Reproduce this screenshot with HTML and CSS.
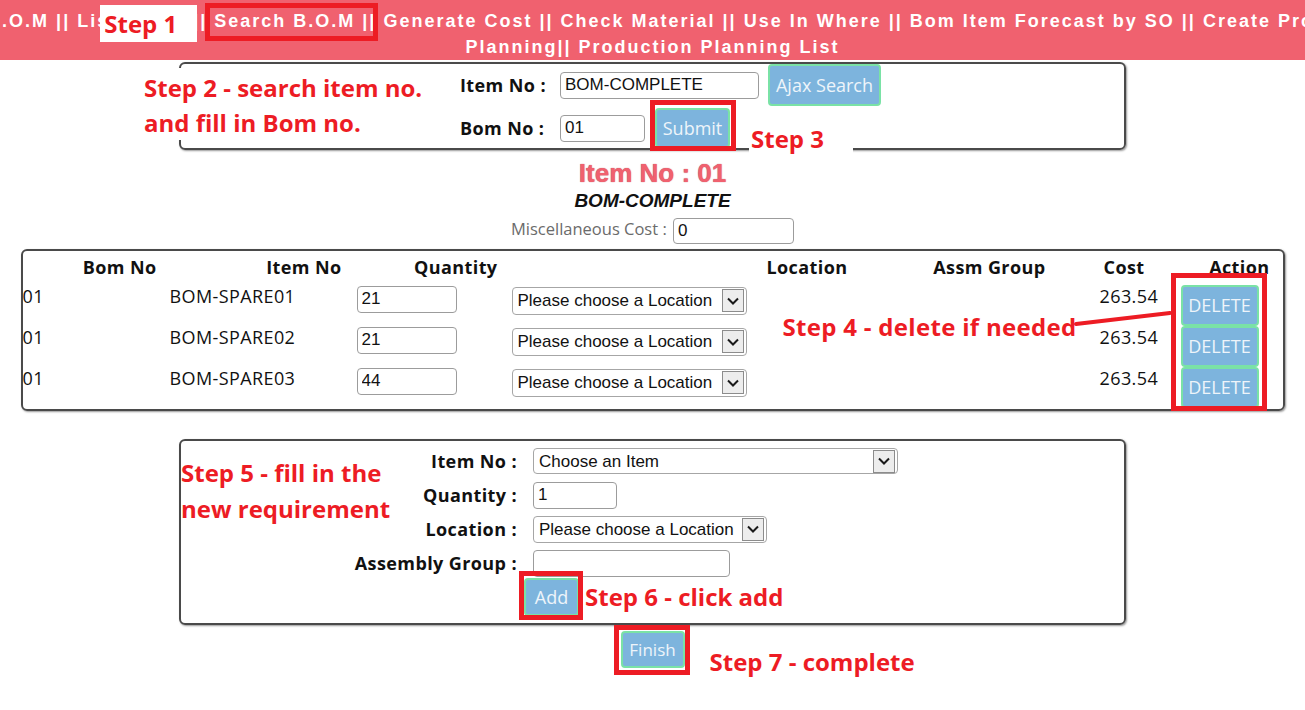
FILE: index.html
```html
<!DOCTYPE html>
<html lang="en">

<head>
    <meta charset="UTF-8" />
    <title>Search B.O.M</title>
    <link rel="stylesheet" href="styles.css">
</head>

<body>

    <div class="topnav">
        <div class="navline">
            <a href="#">Create B.O.M</a> || <a href="#">List B.O.M</a> || <span class="navmark"><a href="#">Search B.O.M</a> ||</span> <a href="#">Generate Cost</a> || <a href="#">Check Material</a> || <a href="#">Use In Where</a> || <a href="#">Bom Item Forecast by SO</a> || <a href="#">Create Production</a>
        </div>
        <div class="navline">
            <a href="#">Planning</a>|| <a href="#">Production Planning List</a>
        </div>
    </div>

    <div class="searchbox">
        <p class="step step2">Step 2 - search item no.<br>and fill in Bom no.</p>
        <div class="formgrid">
            <label>Item No :</label>
            <div class="fieldrow">
                <input type="text" class="in-item" value="BOM-COMPLETE">
                <button class="btn btn-ajax">Ajax Search</button>
            </div>
            <label>Bom No :</label>
            <div class="fieldrow">
                <input type="text" class="in-bom" value="01">
                <span class="mark mark-submit"><button class="btn btn-submit">Submit</button></span>
            </div>
        </div>
        <p class="step step3">Step 3</p>
    </div>

    <h2 class="itemtitle">Item No : 01</h2>
    <h3 class="bomname">BOM-COMPLETE</h3>
    <div class="misc">
        <span>Miscellaneous Cost :</span>
        <input type="text" class="in-misc" value="0">
    </div>

    <div class="bombox">
        <div class="bomgrid">
            <div class="th h-bom">Bom No</div>
            <div class="th h-item">Item No</div>
            <div class="th h-qty">Quantity</div>
            <div class="th"></div>
            <div class="th h-loc">Location</div>
            <div class="th h-assm">Assm Group</div>
            <div class="th h-cost">Cost</div>
            <div class="th h-act">Action</div>

            <div class="td">01</div>
            <div class="td c-item">BOM-SPARE01</div>
            <div class="td c-qty"><input type="text" class="in-qty" value="21"></div>
            <div class="td c-loc">
                <span class="pick pick-row"><select><option>Please choose a Location</option></select><span class="pick-arrow"><svg width="12" height="8" viewBox="0 0 12 8"><path d="M1 1.5 6 6.5 11 1.5" fill="none" stroke="#1a1a1a" stroke-width="2"/></svg></span></span>
            </div>
            <div class="td"></div>
            <div class="td"></div>
            <div class="td c-cost">263.54</div>
            <div class="td c-act"><button class="btn btn-del">DELETE</button></div>

            <div class="td">01</div>
            <div class="td c-item">BOM-SPARE02</div>
            <div class="td c-qty"><input type="text" class="in-qty" value="21"></div>
            <div class="td c-loc">
                <span class="pick pick-row"><select><option>Please choose a Location</option></select><span class="pick-arrow"><svg width="12" height="8" viewBox="0 0 12 8"><path d="M1 1.5 6 6.5 11 1.5" fill="none" stroke="#1a1a1a" stroke-width="2"/></svg></span></span>
            </div>
            <div class="td"></div>
            <div class="td"></div>
            <div class="td c-cost">263.54</div>
            <div class="td c-act"><button class="btn btn-del">DELETE</button></div>

            <div class="td">01</div>
            <div class="td c-item">BOM-SPARE03</div>
            <div class="td c-qty"><input type="text" class="in-qty" value="44"></div>
            <div class="td c-loc">
                <span class="pick pick-row"><select><option>Please choose a Location</option></select><span class="pick-arrow"><svg width="12" height="8" viewBox="0 0 12 8"><path d="M1 1.5 6 6.5 11 1.5" fill="none" stroke="#1a1a1a" stroke-width="2"/></svg></span></span>
            </div>
            <div class="td"></div>
            <div class="td"></div>
            <div class="td c-cost">263.54</div>
            <div class="td c-act"><button class="btn btn-del">DELETE</button></div>
        </div>

        <p class="step step4">Step 4 - delete if needed</p>
        <svg class="step4-line" width="100" height="20" viewBox="0 0 100 20">
            <path d="M3 15 97 4" stroke="#ed1c24" stroke-width="4" stroke-linecap="round" />
        </svg>
        <div class="actmark"></div>
    </div>

    <div class="addbox">
        <p class="step step5">Step 5 - fill in the<br>new requirement</p>
        <div class="addgrid">
            <label>Item No :</label>
            <span class="pick pick-item"><select><option>Choose an Item</option></select><span class="pick-arrow"><svg width="12" height="8" viewBox="0 0 12 8"><path d="M1 1.5 6 6.5 11 1.5" fill="none" stroke="#1a1a1a" stroke-width="2"/></svg></span></span>
            <label>Quantity :</label>
            <div><input type="text" class="in-addqty" value="1"></div>
            <label>Location :</label>
            <span class="pick pick-addloc"><select><option>Please choose a Location</option></select><span class="pick-arrow"><svg width="12" height="8" viewBox="0 0 12 8"><path d="M1 1.5 6 6.5 11 1.5" fill="none" stroke="#1a1a1a" stroke-width="2"/></svg></span></span>
            <label>Assembly Group :</label>
            <div><input type="text" class="in-assm" value=""></div>
            <div class="addrow">
                <span class="mark mark-add"><button class="btn btn-add">Add</button></span>
                <span class="step step6">Step 6 - click add</span>
            </div>
        </div>
    </div>

    <div class="finishrow">
        <span class="mark mark-finish">
            <button class="btn btn-finish">Finish</button>
            <span class="step step7">Step 7 - complete</span>
        </span>
    </div>

</body>

</html>
```

FILE: styles.css
```css
body {
    margin: 0;
    min-height: 710px;
    background-color: #fff;
    color: #111;
    font-family: "Open Sans", Arial, sans-serif;
}

/* menu bar */
.topnav {
    height: 60px;
    box-sizing: border-box;
    padding-top: 8px;
    background-color: #f0616f;
    display: flex;
    flex-direction: column;
    align-items: center;
    overflow: hidden;
    font-family: "Liberation Sans", Arial, sans-serif;
    font-weight: bold;
    font-size: 18px;
    line-height: 26px;
    letter-spacing: 2px;
    color: #fff;
    white-space: nowrap;
}

.topnav a {
    color: #fff;
    text-decoration: none;
}

.navmark {
    position: relative;
    display: inline-block;
}

.navmark::after {
    content: "";
    position: absolute;
    top: -5px;
    bottom: -7px;
    left: -9px;
    right: -2px;
    border: 5px solid #ed1c24;
}

.navmark::before {
    content: "Step 1";
    position: absolute;
    top: -3px;
    right: calc(100% + 17px);
    width: 93px;
    height: 37px;
    padding-left: 4px;
    background-color: #fff;
    color: #ed1c24;
    font-family: "Open Sans", sans-serif;
    font-size: 24px;
    line-height: 37px;
    letter-spacing: 0;
    text-align: left;
}

/* notes in red */
.step {
    margin: 0;
    color: #ed1c24;
    font-family: "Open Sans", sans-serif;
    font-weight: bold;
    font-size: 24px;
    line-height: 30px;
    white-space: nowrap;
}

.mark {
    position: relative;
    display: inline-block;
}

.mark::after {
    content: "";
    position: absolute;
    border: 5px solid #ed1c24;
    pointer-events: none;
}

/* common controls */
input[type="text"] {
    box-sizing: border-box;
    height: 27px;
    border: 1px solid #9c9c9c;
    border-radius: 4px;
    padding: 0 4px;
    font-family: "Liberation Sans", Arial, sans-serif;
    font-size: 17px;
    color: #111;
}

.btn {
    box-sizing: border-box;
    background-color: #7db4dd;
    border: 2px solid #7ae2a6;
    border-radius: 4px;
    padding: 0;
    color: #eef4fa;
    font-family: "Open Sans", sans-serif;
    font-size: 17px;
    cursor: pointer;
}

.pick {
    box-sizing: border-box;
    display: inline-flex;
    align-items: center;
    height: 28px;
    border: 1px solid #a6a6a6;
    border-radius: 4px;
    padding: 0 2px 0 5px;
    background-color: #fff;
}

.pick select {
    flex: 1;
    min-width: 0;
    appearance: none;
    -webkit-appearance: none;
    border: none;
    background: transparent;
    padding: 0;
    font-family: "Liberation Sans", Arial, sans-serif;
    font-size: 17px;
    color: #111;
    outline: none;
}

.pick-arrow {
    box-sizing: border-box;
    width: 22px;
    height: 23px;
    border: 1px solid #8c8c8c;
    background-color: #ededed;
    display: flex;
    align-items: center;
    justify-content: center;
}

/* search box */
.searchbox {
    position: relative;
    box-sizing: border-box;
    width: 947px;
    height: 88px;
    margin: 2px auto 0;
    border: 2px solid #4a4a4a;
    border-radius: 6px;
    box-shadow: 1px 1px 2px #999;
}

.formgrid {
    display: grid;
    grid-template-columns: 100px auto;
    grid-template-rows: 42px 40px;
    row-gap: 2px;
    align-items: center;
    padding-left: 279px;
}

.formgrid label,
.addgrid label {
    font-weight: bold;
    font-size: 18px;
    letter-spacing: 0.4px;
}

.fieldrow {
    display: flex;
    align-items: center;
}

.in-item {
    width: 199px;
}

.in-bom {
    width: 85px;
}

.btn-ajax {
    width: 113px;
    height: 42px;
    margin-left: 9px;
    font-size: 18px;
}

.btn-submit {
    width: 75px;
    height: 40px;
    font-size: 18px;
    display: block;
}

.mark-submit {
    margin-left: 10px;
}

.mark-submit::after {
    top: -8px;
    bottom: -3px;
    left: -5px;
    right: -6px;
}

.step2 {
    position: absolute;
    left: -37px;
    top: 4px;
    width: 280px;
    padding-top: 2px;
    line-height: 35px;
    background-color: #fff;
}

.step3 {
    position: absolute;
    left: 568px;
    top: 60px;
    width: 102px;
    height: 30px;
    padding: 0 0 0 2px;
    background-color: #fff;
}

/* item heading */
.itemtitle {
    margin: 9px 0 0;
    text-align: center;
    font-family: "Liberation Sans", Arial, sans-serif;
    font-size: 26px;
    line-height: 28px;
    color: #f0616f;
    text-shadow: 0 0 1px #b04350;
}

.bomname {
    margin: 0;
    text-align: center;
    font-family: "Liberation Sans", Arial, sans-serif;
    font-style: italic;
    font-size: 19px;
    line-height: 28px;
}

.misc {
    text-align: center;
    line-height: 28px;
    font-size: 16.5px;
    color: #6b6b6b;
}

.in-misc {
    width: 121px;
    height: 26px !important;
    margin-left: 2px;
    vertical-align: middle;
}

/* bom lines */
.bombox {
    position: relative;
    box-sizing: border-box;
    width: 1264px;
    height: 162px;
    margin: 5px auto 0;
    border: 2px solid #4a4a4a;
    border-radius: 6px;
    box-shadow: 1px 1px 2px #999;
}

.bomgrid {
    display: grid;
    grid-template-columns: 136px 185px 160px 255px 100px 200px 110px 114px;
    grid-template-rows: 34px 41px 41px 41px;
    font-size: 18px;
    letter-spacing: 0.4px;
    line-height: 22px;
}

.th {
    padding-top: 5px;
    font-weight: bold;
    text-align: right;
}

.h-bom {
    padding-right: 2px;
}

.h-item {
    padding-right: 2px;
}

.h-qty {
    padding-right: 6px;
}

.h-loc {
    text-align: left;
    padding-left: 8px;
}

.h-assm {
    padding-right: 13px;
}

.h-cost {
    padding-right: 24px;
}

.h-act {
    padding-right: 13px;
}

.td {
    padding-top: 0;
}

.c-item {
    padding-left: 11px;
}

.c-qty {
    padding-left: 13px;
    padding-top: 1px;
}

.in-qty {
    width: 100px;
}

.c-loc {
    padding-top: 2px;
    padding-left: 8px;
    letter-spacing: 0;
}

.pick-row {
    width: 235px;
}

.c-cost {
    padding-left: 41px;
}

.c-act {
    padding: 0 0 0 12px;
}

.btn-del {
    display: block;
    width: 78px;
    height: 41px;
    font-size: 18px;
    letter-spacing: 0;
}

.step4 {
    position: absolute;
    left: 760px;
    top: 61px;
    letter-spacing: 0.3px;
}

.step4-line {
    position: absolute;
    left: 1050px;
    top: 58px;
}

.actmark {
    position: absolute;
    left: 1148px;
    top: 22px;
    width: 96px;
    height: 138px;
    box-sizing: border-box;
    border: 5px solid #ed1c24;
}

/* new line form */
.addbox {
    position: relative;
    box-sizing: border-box;
    width: 947px;
    height: 186px;
    margin: 28px auto 0;
    border: 2px solid #4a4a4a;
    border-radius: 6px;
    box-shadow: 1px 1px 2px #999;
}

.addgrid {
    display: grid;
    grid-template-columns: 336px auto;
    grid-auto-rows: 27px;
    column-gap: 16px;
    row-gap: 7px;
    padding-top: 7px;
    align-items: center;
}

.addgrid label {
    text-align: right;
    line-height: 27px;
}

.pick-item {
    width: 365px;
    height: 26px;
}

.pick-addloc {
    width: 234px;
    height: 27px;
}

.in-addqty {
    width: 84px;
    display: block;
}

.in-assm {
    width: 197px;
    display: block;
}

.addrow {
    grid-column: 2;
    height: 38px;
    display: flex;
    align-items: center;
}

.mark-add {
    margin-left: -9px;
}

.mark-add::after {
    top: -7px;
    bottom: -4px;
    left: -5px;
    right: -4px;
}

.btn-add {
    display: block;
    width: 55px;
    height: 38px;
    font-size: 18px;
}

.step6 {
    margin-left: 6px;
}

.step5 {
    position: absolute;
    left: 0;
    top: 14px;
    line-height: 36px;
}

/* finish */
.finishrow {
    text-align: center;
    padding: 6px 0 40px;
}

.btn-finish {
    display: block;
    width: 64px;
    height: 37px;
    font-size: 17px;
}

.mark-finish::after {
    top: -6px;
    bottom: -7px;
    left: -7px;
    right: -5px;
}

.step7 {
    position: absolute;
    left: calc(100% + 25px);
    top: 16px;
}
```
